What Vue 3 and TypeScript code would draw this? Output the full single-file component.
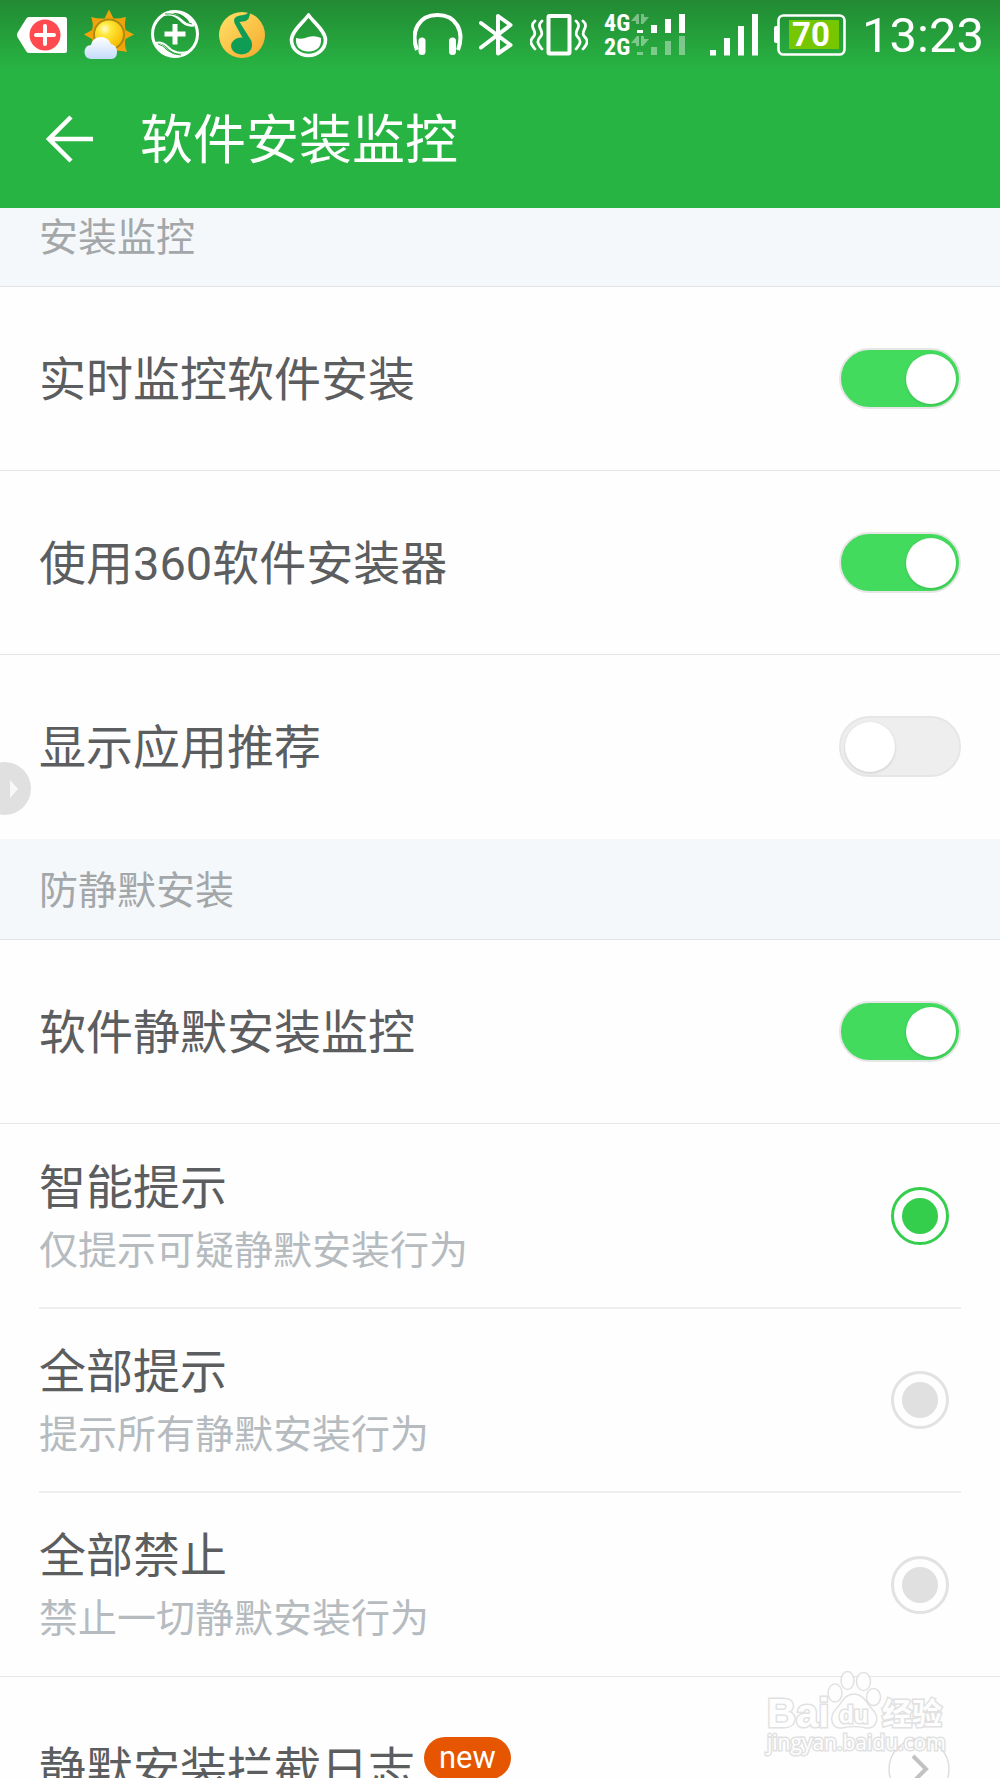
<script setup lang="ts">
import { ref } from 'vue'

interface Toggle {
  id: string
  label: string
  on: boolean
}

interface Mode {
  id: string
  title: string
  note: string
}

const installToggles = ref<Toggle[]>([
  { id: 'realtime', label: '实时监控软件安装', on: true },
  { id: 'installer', label: '使用360软件安装器', on: true },
  { id: 'recommend', label: '显示应用推荐', on: false },
])

const silentToggles = ref<Toggle[]>([
  { id: 'silent', label: '软件静默安装监控', on: true },
])

const modes: Mode[] = [
  { id: 'smart', title: '智能提示', note: '仅提示可疑静默安装行为' },
  { id: 'all', title: '全部提示', note: '提示所有静默安装行为' },
  { id: 'block', title: '全部禁止', note: '禁止一切静默安装行为' },
]

const mode = ref('smart')
</script>

<template>
  <div class="screen">
    <header class="header">
      <div class="status">
        <div class="status-group status-left">
          <svg width="50" height="70" viewBox="17 0 50 70" aria-hidden="true">
            <path d="M17 35 Q17 33 18 32 L26 19 Q27 17 29 17 H65 Q67 17 67 19 V51 Q67 53 65 53 H29 Q27 53 26 51 L18 38 Q17 37 17 35Z" fill="#fff" />
            <circle cx="45" cy="35" r="15.5" fill="#ff4b50" />
            <path d="M45 26V44M36 35H54" stroke="#fff" stroke-width="4" stroke-linecap="round" />
          </svg>
          <svg width="50" height="70" viewBox="84 0 50 70" aria-hidden="true">
            <defs>
              <radialGradient id="sun" cx="0.35" cy="0.3" r="0.75">
                <stop offset="0" stop-color="#fffbd0" />
                <stop offset="0.3" stop-color="#ffe838" />
                <stop offset="1" stop-color="#f8b800" />
              </radialGradient>
              <linearGradient id="cloud" x1="0" y1="0" x2="0" y2="1">
                <stop offset="0" stop-color="#fff" />
                <stop offset="1" stop-color="#c4dcfb" />
              </linearGradient>
            </defs>
            <path d="M109 9.500L113.500 18.500 Q118 19 126 17 Q124 24 125.500 30 L134 34.500 L125.500 39 Q124 45 127 52 Q119 50 113.500 51 L109 59 L104 51 Q98 50 91 52 Q94 45 92 39 L84 34.500 L92 30 Q94 24 91 17 Q98 19 104.500 18.500Z" fill="#f2a30c" />
            <circle cx="109" cy="34.500" r="16" fill="#a98a12" />
            <circle cx="109" cy="34.500" r="14" fill="url(#sun)" />
            <path d="M91 59 Q84 58 84.500 51 Q85.500 45 91 45 Q93 37 101 37 Q108 37 111 44 Q117 45 117 52 Q117 58 112 59Z" fill="url(#cloud)" />
          </svg>
          <svg width="50" height="70" viewBox="151 0 50 70" fill="none" aria-hidden="true">
            <circle cx="175" cy="34" r="22.500" stroke="#fff" stroke-width="3" />
            <path d="M161 13.500 Q170 9 180 14 Q188 18 190 24 L195 25 L195 22 Q188 11 175 10.500 Q167 10 161 13.500Z" fill="#fff" />
            <path d="M163 14.500 Q174 12 181 20 Q186 26 194 25" stroke="#fff" stroke-width="3" />
            <path d="M154 43 Q162 42 167 49 Q174 57 187 53 Q182 58 174 57.500 Q160 56 154 43Z" fill="#fff" />
            <path d="M155 43 Q162 41 168 47 Q175 55 188 52" stroke="#fff" stroke-width="2" />
            <path d="M158 44 Q163 45 167 50 Q173 55 181 55" stroke="#28a23d" stroke-width="1" />
            <path d="M165 14 Q175 13 181 18 Q187 24 192 24" stroke="#28a23d" stroke-width="1" />
            <path d="M175 24V44.500M164.500 34H185.500" stroke="#fff" stroke-width="5" />
          </svg>
          <svg width="50" height="70" viewBox="218 0 50 70" aria-hidden="true">
            <defs>
              <linearGradient id="disc" x1="0" y1="0" x2="1" y2="1">
                <stop offset="0" stop-color="#ffe269" />
                <stop offset="1" stop-color="#f6a92b" />
              </linearGradient>
            </defs>
            <circle cx="242" cy="35" r="23" fill="url(#disc)" />
            <ellipse cx="241.500" cy="46" rx="10.500" ry="8.500" fill="#0f9d55" />
            <path d="M250 11 Q250.500 21 243 21.500 L239.500 22 L251.500 41 L252 46 H247 L234.500 23 Q232 17 240 15.500 Q247 15 250 11Z" fill="#0f9d55" />
          </svg>
          <svg width="50" height="70" viewBox="285 0 50 70" aria-hidden="true">
            <path d="M308.500 15 C303 23 291.500 31 291.500 40 A17 15.500 0 0 0 325.500 40 C325.500 31 314 23 308.500 15Z" fill="none" stroke="#fff" stroke-width="3.600" stroke-linejoin="round" />
            <path d="M296 38 Q302 40 308 37 Q315 35 321 38 Q322 51 308.500 51.500 Q295 51 296 38Z" fill="#fff" />
          </svg>
        </div>
        <div class="status-group status-right">
          <svg width="50" height="70" viewBox="411 0 50 70" aria-hidden="true">
            <path d="M415 50 C408 31 417 15 435.500 15 C454 15 463 31 456 50" fill="none" stroke="#fff" stroke-width="4" />
            <rect x="416.500" y="37.500" width="7" height="17.500" rx="3.500" fill="#fff" />
            <rect x="447" y="37.500" width="7" height="17.500" rx="3.500" fill="#fff" />
          </svg>
          <svg width="35" height="70" viewBox="477 0 35 70" fill="none" stroke="#fff" stroke-width="4" stroke-linecap="round" stroke-linejoin="round" aria-hidden="true">
            <path d="M479 23 L508.500 45 L496 53.500 V16 L508.500 25 L479 47.500" />
          </svg>
          <svg width="58" height="70" viewBox="529 0 58 70" fill="none" stroke="#fff" aria-hidden="true">
            <rect x="547.500" y="16" width="21" height="37.500" rx="1" stroke-width="4" />
            <path d="M534 21 C527 27 537 31 533 36 C527 42 531 45 534 49M541 21 C534 27 544 31 540 36 C534 42 538 45 541 49M575 21 C582 27 572 31 576 36 C582 42 578 45 575 49M582 21 C589 27 579 31 583 36 C589 42 585 45 582 49" stroke-width="2.800" stroke-linecap="round" />
          </svg>
          <svg width="82" height="70" viewBox="603 0 82 70" fill="#fff" aria-label="4G 2G">
            <text x="603" y="31" class="net">4G</text>
            <text x="603" y="55" class="net">2G</text>
            <path d="M636 30h6v3h-6zM650 25h6v8h-6zM664 19h6v14h-6zM678 14h6v19h-6z" />
            <g opacity="0.4">
              <path d="M636 52h6v3h-6zM650 47h6v8h-6zM664 41h6v14h-6zM678 36h6v19h-6z" />
              <path d="M630 21 L636 14 H638 V24 H635 V21ZM640 14 H643 V17 H648 L642 24 H640Z" />
              <path d="M630 43 L636 36 H638 V46 H635 V43ZM640 36 H643 V39 H648 L642 46 H640Z" />
            </g>
          </svg>
          <svg width="56" height="70" viewBox="700 0 56 70" fill="#fff" aria-hidden="true">
            <path d="M708 50h6v5.500h-6zM722 38h6v17.500h-6zM736 26h6v29.500h-6zM750 14h6v41.500h-6z" />
          </svg>
          <svg width="72" height="70" viewBox="772 0 72 70" aria-label="70">
            <rect x="772" y="26" width="5" height="17" rx="2" fill="#fff" />
            <rect x="776.500" y="15.500" width="66" height="39" rx="5" fill="none" stroke="#fff" stroke-width="2.600" />
            <rect x="787" y="20" width="50" height="29" fill="#76c600" />
            <text x="809" y="46" class="charge">70</text>
          </svg>
          <time class="clock">13:23</time>
        </div>
      </div>
      <div class="titlebar">
        <button class="back" type="button" aria-label="返回">
          <svg width="48" height="48" viewBox="0 0 48 48" fill="none" stroke="#fff" stroke-width="4.500" aria-hidden="true">
            <path d="M25 2 L3 24 L25 46M3 24H47" />
          </svg>
        </button>
        <h1 class="title">软件安装监控</h1>
      </div>
    </header>

    <main class="content">
      <h2 class="section section-first">安装监控</h2>
      <label v-for="item in installToggles" :key="item.id" class="row">
        <span class="label">{{ item.label }}</span>
        <input v-model="item.on" class="switch" type="checkbox" />
      </label>

      <h2 class="section">防静默安装</h2>
      <label v-for="item in silentToggles" :key="item.id" class="row">
        <span class="label">{{ item.label }}</span>
        <input v-model="item.on" class="switch" type="checkbox" />
      </label>

      <div class="modes">
        <label v-for="item in modes" :key="item.id" class="mode">
          <span class="mode-text">
            <span class="mode-title">{{ item.title }}</span>
            <span class="mode-note">{{ item.note }}</span>
          </span>
          <input v-model="mode" class="radio" type="radio" name="mode" :value="item.id" />
        </label>
      </div>

      <a class="row log" href="#log">
        <span class="label">静默安装拦截日志</span>
        <span class="badge">new</span>
        <svg class="go" width="62" height="62" viewBox="0 0 62 62" fill="none" aria-hidden="true">
          <circle cx="31" cy="31" r="30" stroke="#dedede" stroke-width="1.500" />
          <path d="M25 18 L38 31 L25 44" stroke="#c2c2c2" stroke-width="4" />
        </svg>
      </a>
    </main>

    <button class="handle" type="button" aria-label="展开">
      <svg width="8" height="18" viewBox="0 0 8 18" aria-hidden="true">
        <path d="M0 0 L8 9 L0 18Z" fill="#f8f8f8" />
      </svg>
    </button>

    <svg class="watermark" width="200" height="100" viewBox="760 1665 200 100" fill="#fff" stroke="#dcdcdc" stroke-width="1.500" aria-hidden="true">
      <text x="767" y="1727" class="mark-brand">Bai</text>
      <ellipse cx="835" cy="1693" rx="7" ry="9" />
      <ellipse cx="847.500" cy="1680.500" rx="6.500" ry="9" />
      <ellipse cx="863.500" cy="1681.500" rx="7" ry="9" />
      <ellipse cx="873.500" cy="1697" rx="7" ry="8.500" />
      <path d="M854 1694 C864 1694 866 1703 872 1709 C881 1718 876 1729 866 1728 C858 1726 850 1726 842 1728 C832 1729 828 1718 836 1709 C842 1703 844 1694 854 1694Z" />
      <text x="839" y="1723" class="mark-du">du</text>
      <text x="882" y="1724" class="mark-cn">经验</text>
      <text x="767" y="1750" class="mark-url">jingyan.baidu.com</text>
    </svg>
  </div>
</template>

<style>
body {
  margin: 0;
  background: #fefefe;
}
</style>

<style scoped>
.screen {
  position: relative;
  display: flex;
  flex-direction: column;
  height: 100vh;
  overflow: hidden;
  background: #fefefe;
  font-family: Roboto, "Noto Sans CJK SC", sans-serif;
}

.header {
  flex: none;
  background: #28b443;
  color: #fff;
}

.status {
  display: flex;
  justify-content: space-between;
  height: 70px;
  padding: 0 16px 0 17px;
  background: linear-gradient(#228a33, #28b443);
}

.status-group {
  display: flex;
  align-items: center;
}

.status-left {
  gap: 17px;
}

.status-right {
  gap: 16px;
}

.status svg {
  display: block;
  flex: none;
}

.net {
  font: 700 24px "Roboto Condensed", "Liberation Sans Narrow", Roboto, sans-serif;
}

.charge {
  font: 700 33px Roboto, sans-serif;
  fill: #fff;
  text-anchor: middle;
}

.clock {
  padding-top: 2px;
  font-size: 49px;
  line-height: 70px;
}

.titlebar {
  display: flex;
  align-items: center;
  gap: 46px;
  height: 138px;
  padding: 0 46px;
}

.back {
  display: flex;
  padding: 0;
  border: 0;
  background: none;
}

.title {
  margin: 0;
  padding-top: 4px;
  font-size: 53px;
  font-weight: 400;
  line-height: 72px;
}

.content {
  flex: 1;
  min-height: 0;
  overflow: hidden;
}

.section {
  box-sizing: border-box;
  margin: 0;
  height: 101px;
  padding: 0 39px;
  border-bottom: 1px solid #e2e4e5;
  background: #f5f8fa;
  color: #a3a7a9;
  font-size: 39px;
  font-weight: 400;
  line-height: 104px;
}

/* The list opens slightly scrolled, its first heading partly under the header. */
.section-first {
  margin-top: -22px;
}

.row {
  box-sizing: border-box;
  display: flex;
  align-items: center;
  justify-content: space-between;
  height: 184px;
  padding: 0 39px;
  border-bottom: 1px solid #e6e6e6;
  color: #5b5d5e;
}

.row:has(+ .section) {
  border-bottom-color: transparent;
}

.label {
  padding-top: 3px;
  font-size: 47px;
  line-height: 64px;
}

.switch {
  appearance: none;
  box-sizing: border-box;
  display: flex;
  align-items: center;
  flex: none;
  width: 122px;
  height: 61px;
  margin: 0;
  padding: 0 4px;
  border: 2px solid #e6e6e6;
  border-radius: 31px;
  background: #eee;
}

.switch::before {
  content: "";
  width: 50px;
  height: 50px;
  border-radius: 50%;
  background: #fff;
  box-shadow: 0 1px 3px rgba(0, 0, 0, 0.15);
}

.switch:checked {
  justify-content: flex-end;
  padding: 0 3px;
  background: #42db5e;
}

.modes {
  padding-top: 1px;
}

.modes,
.log {
  border-bottom: 1px solid #e6e6e6;
}

.mode {
  box-sizing: border-box;
  display: flex;
  align-items: center;
  justify-content: space-between;
  height: 184px;
  margin: 0 39px;
  padding-right: 12px;
  border-bottom: 2px solid #eee;
}

.mode:last-child {
  height: 183px;
  border-bottom: 0;
}

.mode-text {
  display: flex;
  flex-direction: column;
  padding-top: 5px;
}

.mode-title {
  color: #5b5d5e;
  font-size: 47px;
  line-height: 64px;
}

.mode-note {
  color: #b5bbbf;
  font-size: 39px;
  line-height: 62px;
}

.radio {
  appearance: none;
  box-sizing: border-box;
  display: grid;
  place-items: center;
  flex: none;
  width: 58px;
  height: 58px;
  margin: 0;
  border: 3px solid #e2e2e2;
  border-radius: 50%;
}

.radio::before {
  content: "";
  width: 36px;
  height: 36px;
  border-radius: 50%;
  background: #e0e0e0;
}

.radio:checked {
  border-color: #35ce4c;
}

.radio:checked::before {
  background: #35ce4c;
}

.log {
  justify-content: flex-start;
  padding-right: 50px;
  text-decoration: none;
}

.badge {
  align-self: flex-start;
  margin: 60px 0 0 9px;
  padding: 0 15px;
  border-radius: 21px;
  background: #e65500;
  color: #fff;
  font-size: 31px;
  line-height: 42px;
}

.go {
  flex: none;
  margin-left: auto;
}

.handle {
  position: absolute;
  top: 762px;
  left: -22px;
  display: flex;
  align-items: center;
  justify-content: flex-end;
  width: 53px;
  height: 53px;
  padding: 0 13px;
  border: 0;
  border-radius: 50%;
  background: #e0e0e0;
}

.watermark {
  position: absolute;
  right: 40px;
  bottom: 13px;
  opacity: 0.85;
}

.watermark text {
  paint-order: stroke;
  stroke-width: 3px;
}

.mark-brand {
  font: 700 40px "Liberation Sans", sans-serif;
}

.mark-du {
  font: 700 24px "Liberation Sans", sans-serif;
}

.mark-cn {
  font: 700 30px "Noto Sans CJK SC", sans-serif;
}

.mark-url {
  font: 400 21px "Open Sans", sans-serif;
}
</style>
